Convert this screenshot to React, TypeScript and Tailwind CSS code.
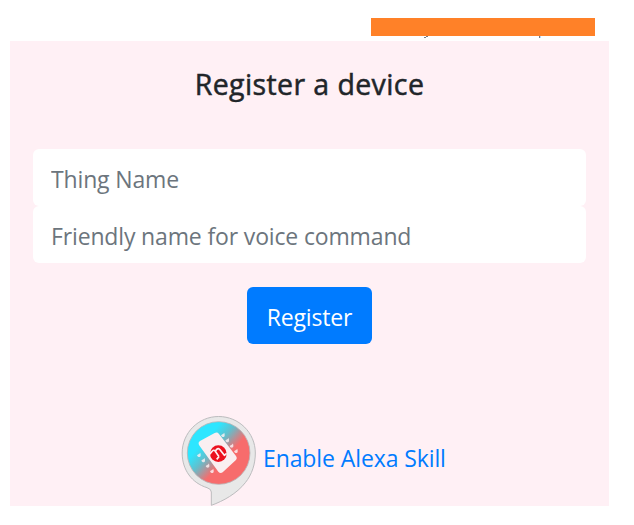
import React from "react";

function SkillLogo() {
  return (
    <svg className="h-[91px] w-[76px] shrink-0" viewBox="18 15 228 273" role="img" aria-label="Alexa skill">
      <defs>
        <linearGradient id="disc" x1="65" y1="65" x2="198" y2="185" gradientUnits="userSpaceOnUse">
          <stop offset="0.2" stopColor="#2de6ff" />
          <stop offset="0.4" stopColor="#62bfcd" />
          <stop offset="0.66" stopColor="#f76c6c" />
        </linearGradient>
      </defs>
      <path
        d="M131 19.500C70 19.500 21.500 69 21.500 129C21.500 180 51 219 96 233Q109 237 109 246V286C145 273 185 251 211 218C231 193 241 162 241 129C241 68 191 19.500 131 19.500Z"
        fill="#e8e8e8" stroke="#bcbcbe" strokeWidth="3"
      />
      <circle cx="131" cy="129" r="94" fill="url(#disc)" stroke="#b9b5b7" strokeWidth="2.500" />
      <g fill="#faeff1">
        {[[145, 75], [158, 91], [171, 107], [184, 123], [73, 135], [86, 151], [99, 167], [112, 183]].map(([x, y]) => (
          <path key={x} opacity="0.85" transform={`translate(${x} ${y}) scale(0.85)`} d="M3-8C5-3 6 3 3 6C-1 9-7 6-8 1C-6-2 0-3 3-8Z" />
        ))}
        <path d="M75 93L119 69Q127 65 132 72L183 138Q188 145 182 151L143 187Q136 192 130 185L74 108Q67 98 75 93Z" />
      </g>
      <circle cx="130" cy="131" r="25" fill="#ec111f" />
      <path
        d="M104 133L112 123Q117 118 121 124L132 140M121 124L125 118Q130 113 135 119L148 136L155 130M132 140L125 148"
        fill="none" stroke="#fff0f2" strokeWidth="5" strokeLinejoin="round"
      />
    </svg>
  );
}

const field =
  "block h-[57px] w-full rounded-[6px] bg-white px-[18px] pt-[2px] text-[23px] tracking-[-0.15px] text-[#495057] outline-none placeholder:text-[#6c757d]";

export default function App() {
  return (
    <div className="h-[525px] w-full bg-white pl-[10px] pt-[18px] font-['Open_Sans','Noto_Sans',sans-serif]">
      <header className="flex h-[23px] w-[599px] justify-end pr-[14px]">
        <div className="w-[224px]">
          <div className="h-[18px] bg-[#ff8128]" />
          <div className="flex h-[2px] pl-[53px]">
            <i className="mt-[1px] h-[1px] w-[2px] bg-[#777b82]" />
            <i className="h-[1px] w-[2px] bg-[#777b82]" />
            <i className="ml-[111px] h-[2px] w-[1px] bg-[#777b82]" />
            <i className="h-[2px] w-[1px] bg-[#b9dcff]" />
          </div>
        </div>
      </header>
      <main className="flex h-[465px] w-[599px] flex-col items-center bg-[#fff0f5] px-[23px]">
        <h1 className="mt-[25px] h-[83px] whitespace-nowrap text-[28.5px] font-medium leading-[36px] tracking-[0.4px] text-[#212529] [-webkit-text-stroke:0.5px_#212529]">Register a device</h1>
        <form className="flex w-full flex-col items-center" onSubmit={(e) => e.preventDefault()}>
          <input className={field} placeholder="Thing Name" />
          <input className={field} placeholder="Friendly name for voice command" />
          <button className="mt-[24px] h-[57px] w-[125px] rounded-[6px] bg-[#007bff] pt-[4px] text-[23px] tracking-[-0.15px] text-white">Register</button>
        </form>
        <a href="#" className="mt-[71px] flex items-start self-start pl-[148px] text-[#007bff]">
          <SkillLogo />
          <span className="ml-[6px] mt-[25px] whitespace-nowrap text-[23px] leading-[36px] tracking-[-0.1px]">Enable Alexa Skill</span>
        </a>
      </main>
    </div>
  );
}
